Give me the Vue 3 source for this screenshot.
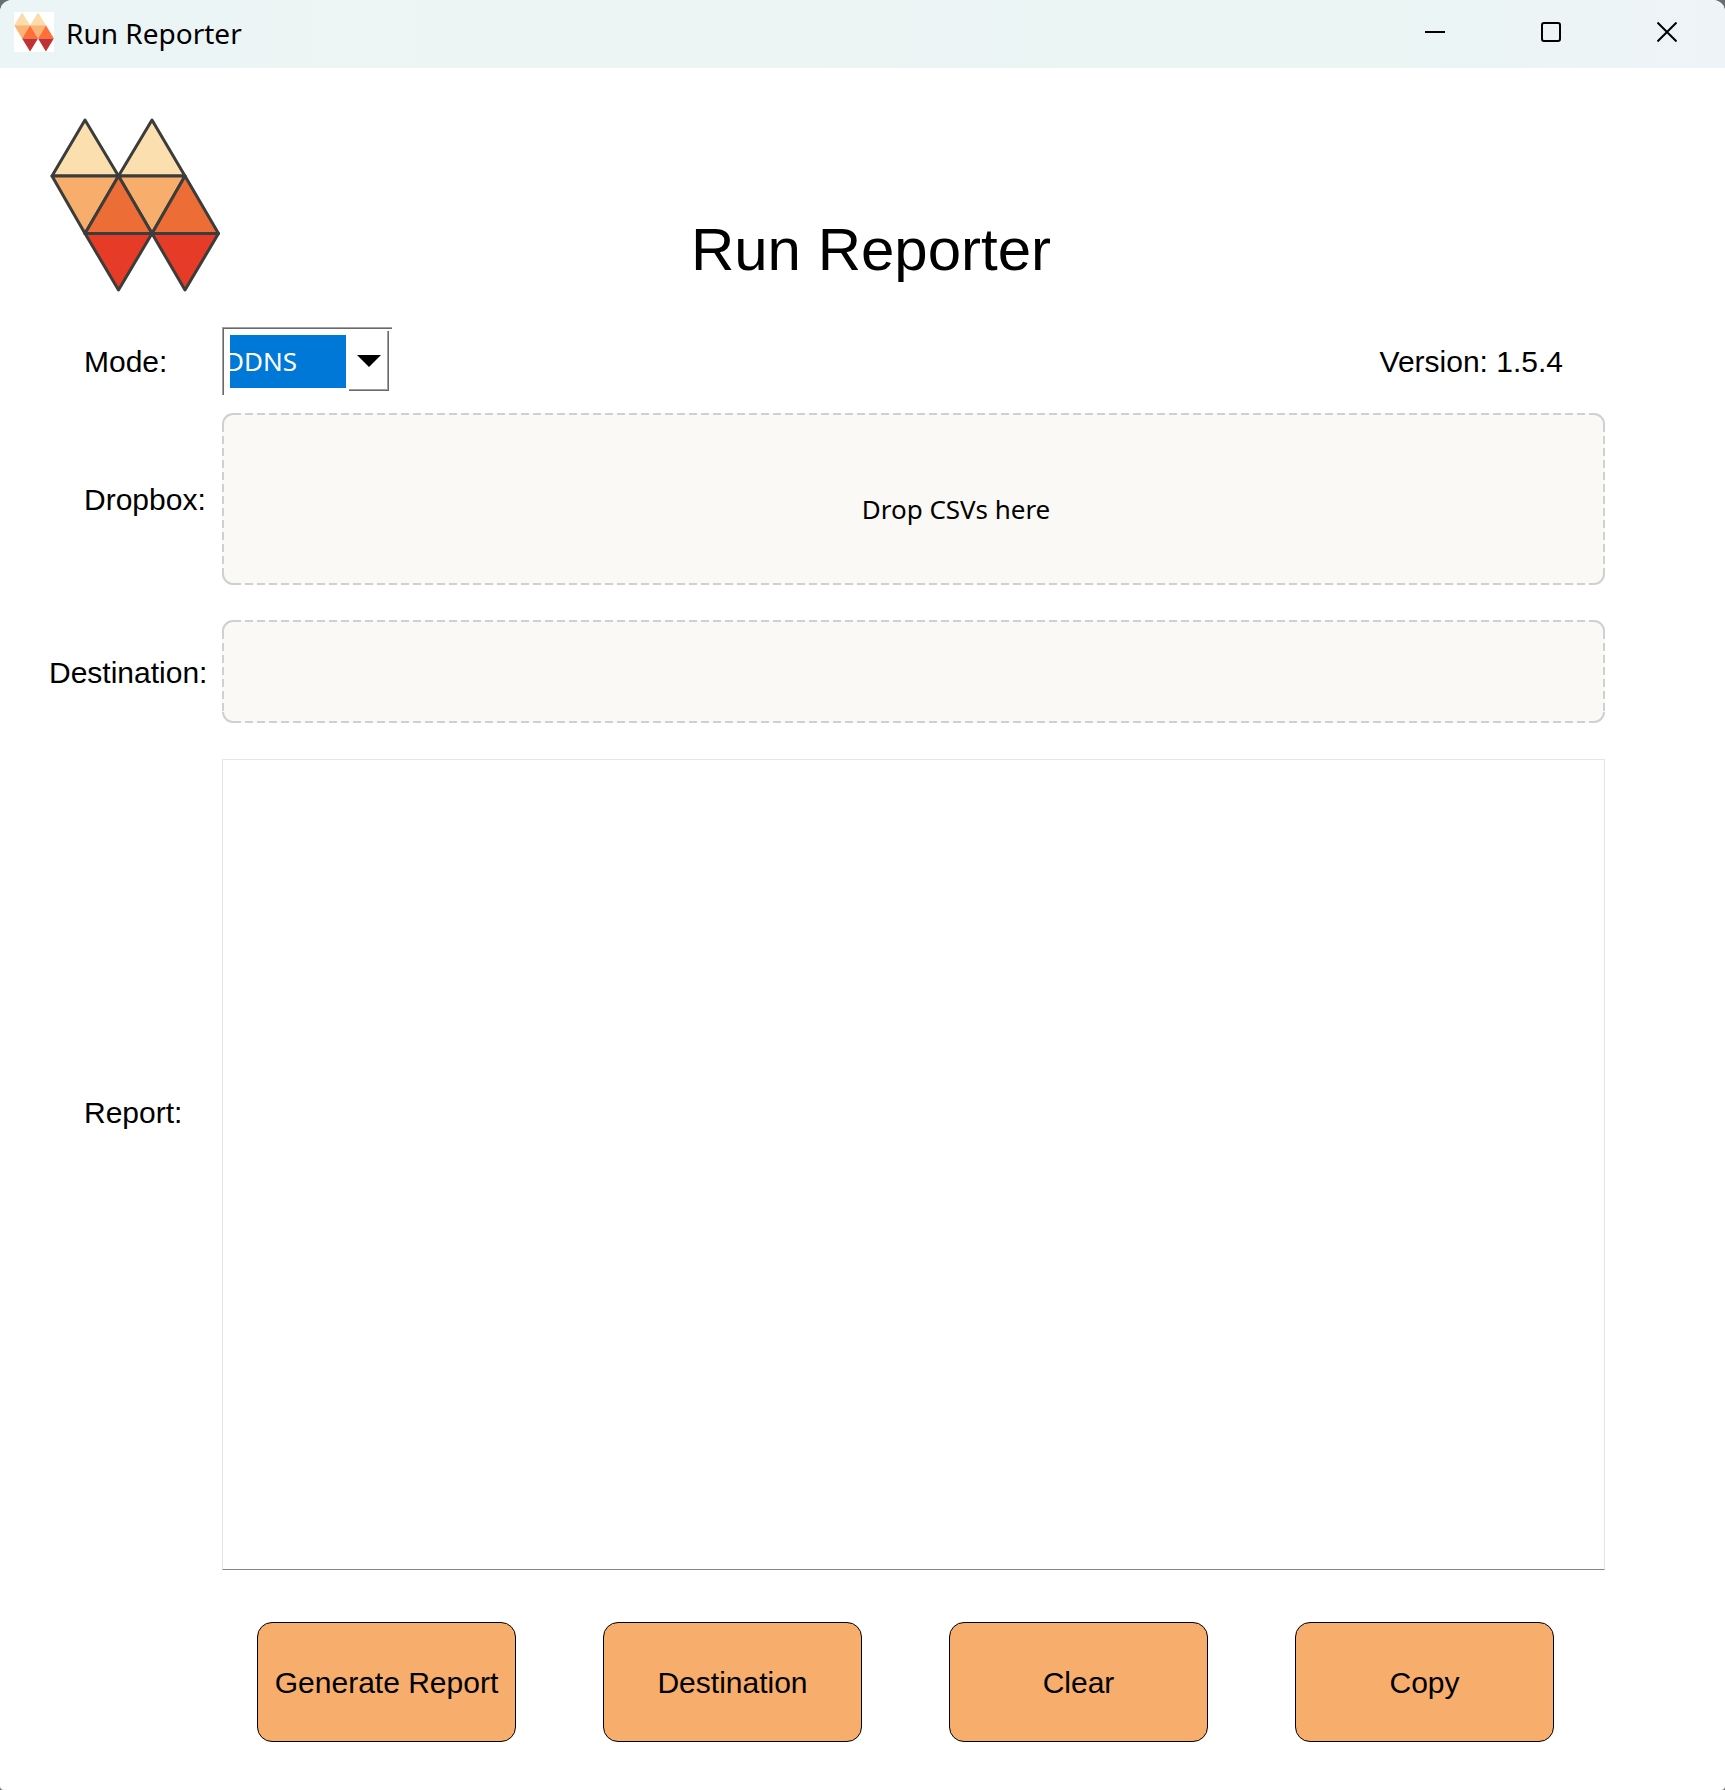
<script setup>
import { ref } from 'vue'

const modes = ['DDNS', 'DNS']
const mode = ref('DDNS')
const report = ref('')
const actions = ['Generate Report', 'Destination', 'Clear', 'Copy']

const tiles = [
  { points: '34,2 67.500,58 1,58', fill: '#fcdfae', small: '#fcdcaa' },
  { points: '101,2 134,58 67.500,58', fill: '#fcdfae', small: '#fcdcaa' },
  { points: '1,58 67.500,58 34,115.500', fill: '#f7ad6c', small: '#fab576' },
  { points: '67.500,58 134,58 101,115.500', fill: '#f7ad6c', small: '#fab576' },
  { points: '67.500,58 101,115.500 34,115.500', fill: '#ec6e36', small: '#ff7038' },
  { points: '134,58 167.500,115.500 101,115.500', fill: '#ec6e36', small: '#ff7038' },
  { points: '34,115.500 101,115.500 67.500,172', fill: '#e63b26', small: '#c03332' },
  { points: '101,115.500 167.500,115.500 134,172', fill: '#e63b26', small: '#c03332' }
]

const zones = [
  { name: 'dropbox', label: 'Dropbox:', text: 'Drop CSVs here' },
  { name: 'destination', label: 'Destination:', text: '' }
]
</script>

<template>
  <div class="window">
    <header class="titlebar">
      <svg class="app-icon" viewBox="0 0 168 174" preserveAspectRatio="none" aria-hidden="true">
        <polygon v-for="t in tiles" :key="t.points" :points="t.points" :fill="t.small" />
      </svg>
      <span class="caption">Run Reporter</span>
      <div class="controls">
        <button type="button" aria-label="Minimize">
          <svg viewBox="0 0 20 20"><path d="M0 10H20" /></svg>
        </button>
        <button type="button" aria-label="Maximize">
          <svg viewBox="0 0 20 20"><rect x="1" y="1" width="18" height="18" rx="2" /></svg>
        </button>
        <button type="button" aria-label="Close">
          <svg viewBox="0 0 20 20"><path d="M0.500 0.500L19.500 19.500M19.500 0.500L0.500 19.500" /></svg>
        </button>
      </div>
    </header>

    <main class="content">
      <div class="masthead">
        <svg class="logo" viewBox="0 0 168 174" aria-hidden="true">
          <polygon v-for="t in tiles" :key="t.points" :points="t.points" :fill="t.fill" />
        </svg>
        <h1>Run Reporter</h1>
      </div>

      <div class="row">
        <label class="label" for="mode">Mode:</label>
        <div class="mode-field">
          <div class="combo">
            <select id="mode" v-model="mode">
              <option v-for="m in modes" :key="m">{{ m }}</option>
            </select>
            <span class="combo-arrow">
              <svg viewBox="0 0 24 12" aria-hidden="true"><path d="M0 0H24L12 12Z" /></svg>
            </span>
          </div>
          <span class="version">Version: 1.5.4</span>
        </div>
      </div>

      <div v-for="z in zones" :key="z.name" class="row" :class="z.name">
        <span :id="z.name + '-label'" class="label">{{ z.label }}</span>
        <div class="zone" role="group" :aria-labelledby="z.name + '-label'">
          <svg class="outline" aria-hidden="true">
            <!-- dashed sides, clipped where the far corner begins -->
            <svg class="sides" x="-10" width="100%" height="100%">
              <line x1="21" y1="0" x2="100%" y2="0" />
              <line x1="21" y1="100%" x2="100%" y2="100%" />
            </svg>
            <svg class="sides" y="-10" width="100%" height="100%">
              <line x1="0" y1="21" x2="0" y2="100%" />
              <line x1="100%" y1="21" x2="100%" y2="100%" />
            </svg>
            <!-- solid corners -->
            <svg class="corner"><path d="M1 11A10 10 0 0 1 11 1" /></svg>
            <svg class="corner" x="100%"><path d="M-11 1A10 10 0 0 1 -1 11" /></svg>
            <svg class="corner" y="100%"><path d="M1 -11A10 10 0 0 0 11 -1" /></svg>
            <svg class="corner" x="100%" y="100%"><path d="M-1 -11A10 10 0 0 1 -11 -1" /></svg>
          </svg>
          <span v-if="z.text">{{ z.text }}</span>
        </div>
      </div>

      <div class="row report">
        <label class="label" for="report">Report:</label>
        <textarea id="report" v-model="report"></textarea>
      </div>

      <div class="actions">
        <button v-for="a in actions" :key="a" type="button">{{ a }}</button>
      </div>
    </main>
  </div>
</template>

<style>
body {
  background: #66706f;
}
</style>

<style scoped>
.window {
  display: flex;
  flex-direction: column;
  min-height: 100vh;
  background: #fff;
  border-radius: 12px 12px 4px 4px;
  overflow: hidden;
  color: #000;
  font: 30px/36px "Liberation Sans", Arial, sans-serif;
}

.titlebar {
  display: flex;
  align-items: center;
  box-sizing: border-box;
  height: 68px;
  padding: 0 0 4px 14px;
  background: linear-gradient(90deg, #ebf5f5, #edf4f4 30%, #eaf5f4 80%, #eef3f7);
}

.app-icon {
  width: 40px;
  height: 40px;
  background: #fff;
}

.caption {
  margin-left: 12px;
  padding-top: 2px;
  font: 28px/36px "Noto Sans", sans-serif;
}

.controls {
  display: flex;
  align-self: stretch;
  margin-left: auto;
}

.controls button {
  display: flex;
  align-items: center;
  justify-content: center;
  width: 116px;
  padding: 0;
  border: 0;
  background: none;
}

.controls svg {
  width: 20px;
  height: 20px;
  fill: none;
  stroke: #000;
  stroke-width: 2;
}

.content {
  display: flex;
  flex: 1;
  flex-direction: column;
  padding: 50px 120px 48px 49px;
}

.masthead {
  display: flex;
  align-items: flex-end;
  padding: 0 82px 35px 2px;
}

.logo {
  flex: none;
  width: 168px;
  height: 174px;
  overflow: visible;
}

.logo polygon {
  stroke: #3c3c3b;
  stroke-width: 3;
  stroke-linejoin: round;
}

h1 {
  flex: 1;
  margin: 0 0 8px;
  font-size: 60px;
  font-weight: 400;
  line-height: 68px;
  text-align: center;
}

.row {
  display: grid;
  grid-template-columns: 173px 1fr;
  align-items: center;
}

.label {
  padding: 2px 0 0 35px;
}

.mode-field {
  display: flex;
  align-items: center;
  justify-content: space-between;
}

.combo {
  display: flex;
  gap: 3px;
  box-sizing: border-box;
  width: 170px;
  height: 68px;
  padding: 3px 0 0 6px;
  border: 0 solid #a0a0a0;
  border-width: 1px 0 0 1px;
  box-shadow: inset 1px 1px #696969;
}

.combo select {
  appearance: none;
  width: 116px;
  height: 53px;
  margin: 4px 0 0 1px;
  padding: 0;
  border: 0;
  border-radius: 0;
  outline: 0;
  background: #0078d7;
  color: #fff;
  font: 26px/53px "Noto Sans", sans-serif;
  text-indent: -5px;
}

.combo select option {
  background: #fff;
  color: #000;
}

.combo-arrow {
  display: flex;
  align-items: center;
  justify-content: center;
  box-sizing: border-box;
  width: 40px;
  height: 60px;
  border: 0 solid #696969;
  border-width: 0 1px 1px 0;
  box-shadow: inset -1px -1px #a0a0a0;
}

.combo-arrow svg {
  width: 24px;
  height: 12px;
}

.version {
  margin-right: 42px;
  padding-top: 2px;
}

.dropbox {
  margin-top: 18px;
}

.zone {
  position: relative;
  display: flex;
  align-items: center;
  justify-content: center;
  box-sizing: border-box;
  padding: 20px 0 0 85px;
  border-radius: 12px;
  background: #faf9f6;
  font: 26px/36px "Noto Sans", sans-serif;
}

.dropbox .zone {
  height: 172px;
}

.destination {
  margin-top: 35px;
}

.destination .label {
  padding-left: 0;
}

.destination .zone {
  height: 103px;
}

.outline {
  position: absolute;
  inset: 0;
  width: 100%;
  height: 100%;
  fill: none;
  stroke: #d0d0d0;
  stroke-width: 2;
}

.sides {
  overflow: hidden;
  stroke-width: 4;
  stroke-dasharray: 8 4;
}

.corner {
  overflow: visible;
}

.report {
  flex: 1;
  margin-top: 36px;
}

.report .label {
  padding-bottom: 106px;
}

textarea {
  align-self: stretch;
  box-sizing: border-box;
  min-height: 300px;
  padding: 8px;
  border: 1px solid #e5e5e5;
  border-bottom-color: #868686;
  outline: 0;
  background: #fff;
  font: inherit;
  resize: none;
}

.actions {
  display: flex;
  justify-content: space-between;
  gap: 16px;
  padding: 52px 51px 0 208px;
}

.actions button {
  width: 259px;
  height: 120px;
  padding: 2px 0 0;
  border: 1px solid #000;
  border-radius: 15px;
  background: #f7ad6c;
  color: #000;
  font: inherit;
}
</style>
